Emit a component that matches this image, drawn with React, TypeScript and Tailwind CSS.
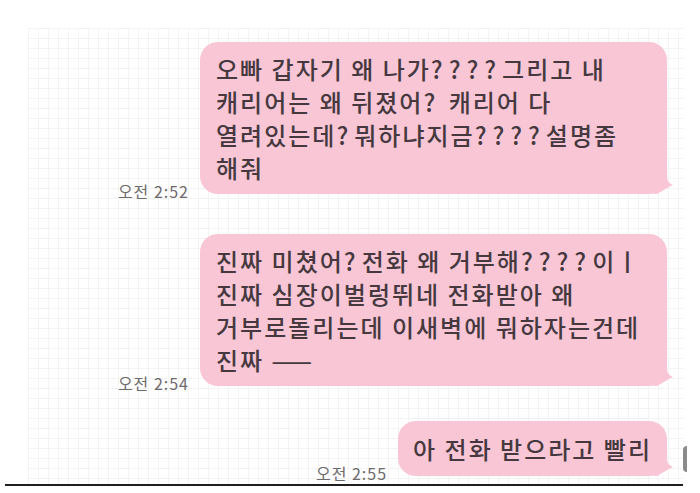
import React from "react";

const font = { fontFamily: '"Noto Sans CJK KR", "Noto Sans", sans-serif' };

// question marks in the original are spaced out wider than the hangul
function Line({ text }: { text: string }) {
  const parts = text.split(/(\?+)/);
  return (
    <div className="whitespace-nowrap">
      {parts.map((p, i) =>
        p.startsWith("?") ? (
          <span key={i} className="tracking-[6px]">
            {p}
          </span>
        ) : (
          <span key={i}>{p}</span>
        )
      )}
    </div>
  );
}

function Tail() {
  return (
    <svg
      className="absolute right-[-7px] bottom-0"
      width="20"
      height="20"
      viewBox="0 0 20 20"
    >
      <path d="M0 0 L13 0 L13 3 C13 7 15 9 19 11 C14 13 9 17 3 20 L0 20 Z" fill="#f9c6d6" />
    </svg>
  );
}

function Row({
  time,
  lines,
  wide,
  className,
}: {
  time: string;
  lines: string[];
  wide?: boolean;
  className?: string;
}) {
  return (
    <div className={`flex justify-end items-end gap-[11px] ${className ?? ""}`}>
      <span className="text-[16px] leading-[20px] tracking-[1px] text-[#6d6a6c] -mb-[7px]">
        {time}
      </span>
      <div
        className={`relative bg-[#f9c6d6] rounded-[18px] text-[#45393f] text-[24px] leading-[33px] tracking-[2px] font-medium ${
          wide ? "w-[467px] pl-[16px] py-[10px]" : "px-[15px] py-[11px]"
        }`}
      >
        {lines.map((l, i) => (
          <Line key={i} text={l} />
        ))}
        <Tail />
      </div>
    </div>
  );
}

export default function App() {
  return (
    <div className="w-[700px] h-[493px] bg-white relative overflow-hidden" style={font}>
      <div className="pt-[28px] flex flex-col">
        <div className="ml-[28px] w-[655px] h-[456px] pt-[14px] pr-[16px] bg-[linear-gradient(to_right,#f3f3f3_1px,transparent_1px),linear-gradient(to_bottom,#f3f3f3_1px,transparent_1px)] bg-[size:10px_10px]">
          <Row
            time="오전 2:52"
            wide
            lines={[
              "오빠 갑자기 왜 나가????그리고 내",
              "캐리어는 왜 뒤졌어? 캐리어 다",
              "열려있는데?뭐하냐지금????설명좀",
              "해줘",
            ]}
          />
          <Row
            className="mt-[40px]"
            time="오전 2:54"
            wide
            lines={[
              "진짜 미쳤어?전화 왜 거부해????이ㅣ",
              "진짜 심장이벌렁뛰네 전화받아 왜",
              "거부로돌리는데 이새벽에 뭐하자는건데",
              "진짜 ——",
            ]}
          />
          <Row className="mt-[35px]" time="오전 2:55" lines={["아 전화 받으라고 빨리"]} />
        </div>
        <div className="ml-[5px] w-[678px] h-[2px] bg-[#1f1f1f]" />
      </div>
      {/* avatar peeking in at the right edge */}
      <div className="absolute left-[683px] top-[446px] w-[4px] h-[26px] rounded-l-full bg-[#8a8a8a]" />
    </div>
  );
}
